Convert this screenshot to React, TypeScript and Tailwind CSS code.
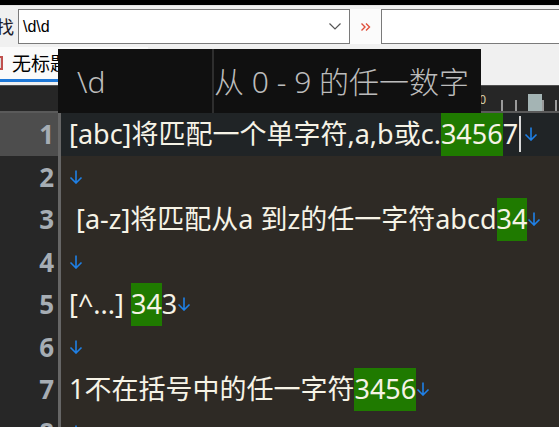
import React from "react";

type Seg = { t: string; m?: boolean };

const lines: { segs: Seg[]; cur?: boolean }[] = [
	{ segs: [{ t: "[abc]将匹配一个单字符,a,b或c." }, { t: "3456", m: true }, { t: "7" }], cur: true },
	{ segs: [] },
	{ segs: [{ t: " [a-z]将匹配从a 到z的任一字符abcd" }, { t: "34", m: true }] },
	{ segs: [] },
	{ segs: [{ t: "[^...] " }, { t: "34", m: true }, { t: "3" }] },
	{ segs: [] },
	{ segs: [{ t: "1不在括号中的任一字符" }, { t: "3456", m: true }] },
	{ segs: [] },
];

const Eol = () => (
	<svg width="14" height="14" viewBox="0 0 14 14" className="shrink-0">
		<path d="M7 0.5V13M1.5 7.5L7 13L12.5 7.5" fill="none" stroke="#1f80e6" strokeWidth="1.6" />
	</svg>
);

export default function App() {
	return (
		<div className="relative w-[559px] h-[427px] overflow-hidden bg-[#2e2a25] font-['Noto_Sans','Noto_Sans_CJK_SC',sans-serif]">
			<div className="h-[5px] bg-black" />

			{/* find bar */}
			<div className="h-[39px] bg-[#f0f0f0] border-t border-[#e3e3e3] flex items-start pt-[3px]">
				<span className="-ml-[4px] w-[22px] text-[18px] leading-[34px] text-[#1a1a2a] font-['Noto_Sans_CJK_SC',sans-serif]">找</span>
				<div className="w-[332px] h-[35px] bg-white border border-[#7a7a7a] flex items-center pl-[4px] pr-[8px]">
					<span className="flex-1 text-[16px] text-black font-['Liberation_Sans',sans-serif]">\d\d</span>
					<svg width="12" height="7" viewBox="0 0 12 7">
						<path d="M0.5 0.5L6 6L11.5 0.5" fill="none" stroke="#555" strokeWidth="1.2" />
					</svg>
				</div>
				<div className="w-[31px] h-[35px] bg-[#fbfbfb] flex items-center justify-center">
					<svg width="10" height="8" viewBox="0 0 10 8">
						<path d="M0.5 0.5L4 4L0.5 7.5M5 0.5L8.5 4L5 7.5" fill="none" stroke="#e0503c" strokeWidth="1.4" />
					</svg>
				</div>
				<div className="flex-1 h-[35px] bg-white border border-[#7a7a7a] border-r-0" />
			</div>

			{/* tabs */}
			<div className="h-[41px] bg-[#f0f0f0] pt-[3px]">
				<div className="w-[148px] h-[35px] bg-[#fafafa] border-b-[3px] border-[#1e78d7] flex items-center">
					<div className="-ml-[10px] w-[13px] h-[14px] border-2 border-[#c0504d] bg-[#dcdcdc]" />
					<span className="ml-[9px] text-[19px] text-black font-['Noto_Sans_CJK_SC',sans-serif]">无标题1</span>
				</div>
			</div>

			{/* ruler */}
			<div className="h-[28px] bg-[#262626] border-t border-[#505050] border-b-2 border-b-[#5a5a5a] flex">
				<div className="w-[61px] shrink-0" />
				<div className="flex pl-[8px]">
					{Array.from({ length: 37 }).map((_, i) => (
						<div key={i} className="w-[13.5px] shrink-0 flex items-end">
							{i === 31 ? (
								<span className="-ml-[15px] mb-[5px] text-[12px] leading-none text-[#d8d0a8]">30</span>
							) : i === 34 ? (
								<div className="w-[14px] h-[17px] bg-[#a4b4b4]" />
							) : (
								<div className="w-[2px] h-[11px] bg-[#9a9a9a]" />
							)}
						</div>
					))}
				</div>
			</div>

			{/* editor */}
			<div className="flex flex-col">
				{lines.map((ln, i) => (
					<div key={i} className={`flex h-[42.5px] ${ln.cur ? "bg-[#202426]" : ""}`}>
						<div
							className={`w-[58px] shrink-0 text-right pr-[4px] text-[26px] font-bold leading-[42.5px] text-[#a6adb4] ${ln.cur ? "bg-[#4d4d4d]" : "bg-[#272727]"}`}
						>
							{i + 1}
						</div>
						<div className="w-[3px] shrink-0 bg-[#666]" />
						<div className="flex items-stretch pl-[8px] text-[27px] text-[#f6f3e6] whitespace-pre">
							{ln.segs.map((s, j) => (
								<span key={j} className={`flex items-center ${s.m ? "bg-[#1f7a00]" : ""}`}>
									{s.t}
								</span>
							))}
							{ln.cur && <span className="self-center w-[2px] h-[36px] bg-[#d8d8d8] ml-[1px] mr-[3px]" />}
							<span className="flex items-center">
								<Eol />
							</span>
						</div>
					</div>
				))}
			</div>

			{/* tooltip */}
			<div className="absolute left-[58px] top-[49px] w-[423px] h-[64px] bg-[#101010] flex text-[#bcbcbc] text-[30px] font-light font-['Noto_Sans','Noto_Sans_CJK_SC',sans-serif]">
				<div className="w-[154px] pl-[19px] flex items-center">\d</div>
				<div className="w-[2px] bg-[#2e2e2e]" />
				<div className="flex items-center whitespace-pre">从 0 - 9 的任一数字</div>
			</div>
		</div>
	);
}
